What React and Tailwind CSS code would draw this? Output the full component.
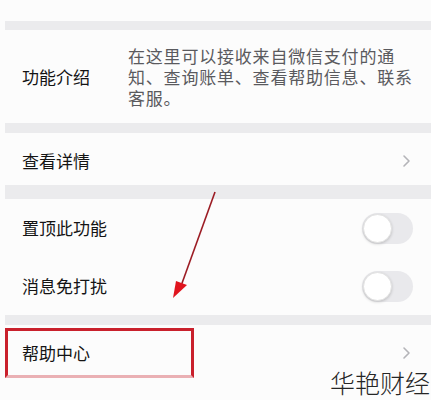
import React from "react";

function Chevron() {
  return (
    <svg width="9" height="14" viewBox="0 0 9 14" className="shrink-0">
      <polyline points="2,2 7,7 2,12" fill="none" stroke="#b4b4b8" strokeWidth="1.6" strokeLinecap="round" strokeLinejoin="round" />
    </svg>
  );
}

function Toggle() {
  return (
    <div className="relative h-[31px] w-[51px] rounded-full bg-[#e9e9ec]">
      <div className="absolute left-[1px] top-[1px] h-[29px] w-[29px] rounded-full border border-[#e2e2e2] bg-white shadow-[0_1px_3px_rgba(0,0,0,0.18)]" />
    </div>
  );
}

function Gap({ h }) {
  return <div className={`ml-[5px] bg-[#ebebed] ${h}`} />;
}

const descLines = ["在这里可以接收来自微信支付的通", "知、查询账单、查看帮助信息、联系", "客服。"];

export default function App() {
  return (
    <div
      className="relative h-[400px] w-[431px] overflow-hidden bg-[#fcfcfc] text-[#141414]"
      style={{ fontFamily: '"Noto Sans CJK SC", "Noto Sans", sans-serif' }}
    >
      <div className="h-[21px]" />
      <Gap h="h-[9px]" />

      <div className="flex h-[93px] items-center px-[22px]">
        <div className="w-[106px] shrink-0 text-[17px]">功能介绍</div>
        <div className="flex flex-col text-[17px] leading-[21px] tracking-[0.8px] text-[#5a5a5e]">
          {descLines.map((line) => (
            <span key={line} className="whitespace-nowrap">{line}</span>
          ))}
        </div>
      </div>

      <Gap h="h-[10px]" />

      <div className="flex h-[52px] items-center justify-between pl-[22px] pr-[20px] pt-[4px]">
        <span className="text-[17px]">查看详情</span>
        <Chevron />
      </div>

      <Gap h="h-[14px]" />

      <div className="flex h-[58px] items-center justify-between pl-[22px] pr-[18px]">
        <span className="text-[17px]">置顶此功能</span>
        <Toggle />
      </div>
      <div className="flex h-[58px] items-center justify-between pl-[22px] pr-[18px]">
        <span className="text-[17px]">消息免打扰</span>
        <Toggle />
      </div>

      <Gap h="h-[10px]" />

      <div className="flex h-[55px] items-center justify-between pl-[22px] pr-[20px]">
        <span className="text-[17px]">帮助中心</span>
        <Chevron />
      </div>

      {/* red highlight box */}
      <div className="absolute left-[5px] top-[328px] h-[50px] w-[189px] border-[3px] border-[#c9202c] border-b-[#eab0b4]" />

      {/* arrow */}
      <svg className="absolute left-0 top-0" width="431" height="400" viewBox="0 0 431 400">
        <line x1="215" y1="192" x2="181" y2="286" stroke="#9c1c24" strokeWidth="1.6" />
        <polygon points="173,298 176,281 187,285" fill="#e0141e" />
      </svg>

      {/* watermark */}
      <div className="absolute right-[1px] top-[366px] text-[25px] font-light leading-[32px] text-[#262626]">
        华艳财经
      </div>
    </div>
  );
}
